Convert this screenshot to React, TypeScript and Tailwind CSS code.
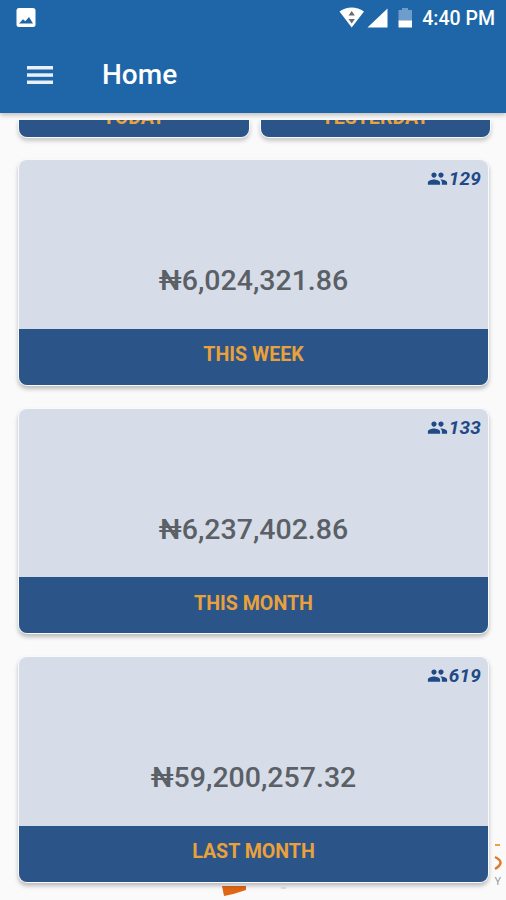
const periods = [
  { label: "THIS WEEK", amount: "₦6,024,321.86", people: "129" },
  { label: "THIS MONTH", amount: "₦6,237,402.86", people: "133" },
  { label: "LAST MONTH", amount: "₦59,200,257.32", people: "619" },
];

function PeopleIcon() {
  return (
    <svg viewBox="0 0 24 24" className="h-[21px] w-[21px]" fill="currentColor">
      <path d="M16 11c1.66 0 2.99-1.34 2.99-3S17.66 5 16 5s-3 1.34-3 3 1.34 3 3 3zm-8 0c1.66 0 2.99-1.34 2.99-3S9.66 5 8 5 5 6.34 5 8s1.34 3 3 3zm0 2c-2.33 0-7 1.17-7 3.5V19h14v-2.5c0-2.33-4.67-3.5-7-3.5zm8 0c-.29 0-.62.02-.97.05 1.16.84 1.97 1.97 1.97 3.45V19h6v-2.5c0-2.33-4.67-3.5-7-3.5z" />
    </svg>
  );
}

function StatusBar() {
  return (
    <div className="flex h-9 items-center pr-[11px] pl-4 text-white">
      <svg viewBox="0 0 20 20" className="h-5 w-5">
        <rect x="0.5" y="0" width="19" height="19" rx="2.5" fill="#fff" />
        <path d="M3 15.5l4-4.2 2.3 2 3.7-4.3 4 6.5z" fill="#1e66a8" />
      </svg>
      <svg viewBox="0 0 76 22" className="ml-auto h-[22px] w-[76px]">
        <path d="M0.5 4.5C8 -1 17.500-1 25 4.500L12.700 20.500z" fill="#fff" />
        <path d="M9.500 8.500L12.700 4l3.200 4.500zM9.500 12h6.400l-3.200 4.500z" fill="#686b70" />
        <path d="M48.500 1.500V20.500H28.500z" fill="#fff" />
        <path d="M63 1h6v2h4v11H59.500V3H63z" fill="#6f9dcb" />
        <path d="M59.500 13.500H73V20.500H59.500z" fill="#fff" />
      </svg>
      <span className="ml-[7px] pt-px text-[19.500px] leading-none font-medium whitespace-nowrap">4:40 PM</span>
    </div>
  );
}

function PeriodCard({ label, amount, people }: { label: string; amount: string; people: string }) {
  return (
    <section className="flex h-[224.500px] flex-col overflow-hidden rounded-lg bg-[#d6dde8] shadow-[0_0_0_1px_#f7f9fc,0_3px_4px_1px_rgba(0,0,0,0.25)]">
      <div className="flex h-[37px] items-center justify-end pr-[7px] text-[#204987]">
        <PeopleIcon />
        <span className="ml-px text-[19px] leading-none font-bold tracking-[0.2px] italic">{people}</span>
      </div>
      <div className="flex flex-1 justify-center pt-[68px] text-[28.500px] leading-8 font-medium text-[#5b5f66]">{amount}</div>
      <div className="flex h-[56px] items-center justify-center bg-[#2b5489] pb-[3px] text-[19.600px] font-bold text-[#e9a13b]">
        {label}
      </div>
    </section>
  );
}

export default function App() {
  return (
    <div className="relative flex h-[900px] w-[506px] flex-col overflow-hidden bg-[#fafafa] font-['Roboto',sans-serif]">
      <header className="h-[113px] shrink-0 bg-[#1e66a8] shadow-[0_2px_5px_rgba(0,0,0,0.25)]">
        <StatusBar />
        <div className="flex h-[77px] items-center pl-[27px]">
          <svg viewBox="0 0 26 18" className="h-[18px] w-[26px]" fill="#e8f0fa">
            <rect width="26" height="3.500" />
            <rect y="7.300" width="26" height="3.500" />
            <rect y="14.500" width="26" height="3.500" />
          </svg>
          <h1 className="ml-[49px] text-[28px] leading-none font-medium text-white">Home</h1>
        </div>
      </header>

      <svg viewBox="0 0 286 60" className="absolute top-[840px] left-[220px] h-[60px] w-[286px]">
        <path d="M2 46H26V50Q15 54 4 56z" fill="#df6716" />
        <path d="M61 48H66" stroke="#ccc" fill="none" />
        <path d="M275 5h5" stroke="#efa044" strokeWidth="2" />
        <path d="M275 17Q281 20 280.500 23Q280 26 275 29" stroke="#df7a2c" strokeWidth="2.500" fill="none" />
        <text x="274.500" y="45" fontSize="11" fill="#9a9a9a">Y</text>
      </svg>

      <main className="relative mt-[7px] flex-1 overflow-hidden pr-[16px] pl-[19px]">
        <div className="flex gap-3">
          {["TODAY", "YESTERDAY"].map((label) => (
            <div
              key={label}
              className="flex h-[17px] flex-1 justify-center rounded-b-lg bg-[#2b5489] shadow-[0_0_0_1px_#f7f9fc,0_3px_4px_1px_rgba(0,0,0,0.2)]"
            >
              <span className="-mt-[12px] text-[19.600px] leading-5 font-bold text-[#e9a13b]">{label}</span>
            </div>
          ))}
        </div>
        <div className="mt-[23px] mr-[2px] flex flex-col gap-6">
          {periods.map((period) => (
            <PeriodCard key={period.label} {...period} />
          ))}
        </div>
      </main>
    </div>
  );
}
